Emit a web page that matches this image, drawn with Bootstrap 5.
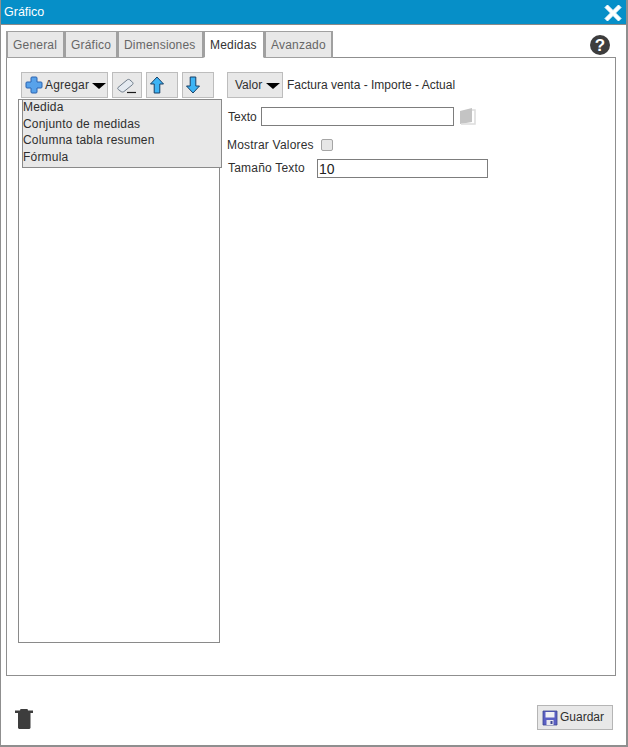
<!DOCTYPE html>
<html lang="es">
<head>
<meta charset="utf-8">
<title>Gráfico</title>
<link href="https://cdn.jsdelivr.net/npm/bootstrap@5.3.0/dist/css/bootstrap.min.css" rel="stylesheet">
<style>
html,body{height:747px;overflow:hidden;background:#fff}
body{font-family:"Liberation Sans",Arial,sans-serif;font-size:12px;line-height:14px;color:#2f2f2f}
.ventana{width:628px;height:747px;border:solid #8f8f8f;border-width:0 2px 2px 1px;display:flex;flex-direction:column}
.titulo{height:25px;background:#068fc8;border-bottom:1px solid #8a8a8a;color:#fff;font-size:12.5px;padding:0 4px 0 3px}
.cierre{display:block;margin-top:1px}
.cuerpo{position:relative;flex:1;padding:6px 10px 0 5px;display:flex;flex-direction:column}
.ayuda{position:absolute;left:589px;top:10px}
.pestanas{display:flex;height:27px;position:relative;z-index:1;margin-bottom:-1px;letter-spacing:.2px}
.pestana{height:27px;border:1px solid #a0a0a0;border-left-width:2px;background:#e8e8e8;color:#666;padding:6px 5px 0 5px;white-space:nowrap}
.pestana:first-child{width:58px}
.p2{width:53px}.p3{width:86px}.p4{width:61px}.p5{width:69px;border-right-width:2px}
.pestana.activa{background:#fff;border-bottom-color:#fff;color:#333}
.panel{height:619px;border:1px solid #8f8f8f;padding:14px 0 0 11px;display:flex;gap:5px;position:relative}
.izq{width:203px;margin-left:1px;flex:none;position:relative}
.barra{display:flex;gap:4px;padding-left:2px;height:26px}
.boton{height:26px;background:#e8e8e8;border:1px solid #bdbdbd;color:#2f2f2f;display:flex;align-items:center;white-space:nowrap}
.b-ag{width:87px;padding-left:3px;gap:2px;letter-spacing:.2px}
.b-ag .flecha{margin-left:1px}
.b-go{width:30px;padding-left:3px}
.b-su{width:32px;padding-left:2px}
.b-ba{width:32px;padding-left:2px}
.b-va{width:56px;padding-left:7px;gap:4px}
.flecha{width:0;height:0;border:solid transparent;border-width:6px 7px 0 7px;border-top-color:#000;display:block;margin-top:1px}
.caja{margin-left:-1px;margin-top:1px;width:202px;height:544px;border:1px solid #8a8a8a;background:#fff}
.menu-flota{position:absolute;left:3px;top:27px;width:200px;height:69px;background:#e8e8e8;border:1px solid #8a8a8a;letter-spacing:.2px}
.menu-flota div{height:16.67px;line-height:15px}
.der{flex:1;display:flex;flex-direction:column}
.fila{display:flex;align-items:center}
.f1{height:26px;gap:4px}
.f2{margin-top:8px;height:20px;gap:4px}
.f2 span,.f3 span{padding-top:2px}
.f2 span{margin-left:1px}
.f2 svg{margin-left:1px}
.f3{margin-top:8px;height:20px;gap:7px}
.f4{margin-top:4px;height:20px;padding-left:1px}
.rotulo{letter-spacing:.2px}
.campo{height:19px;border:1px solid #7d7d7d;background:#fff;padding:2px 1px 0;font-size:14px;line-height:15px;color:#222}
.c1{width:193px}.c2{width:171px;margin-left:12px}
.casilla{width:12px;height:12px;margin-top:2px;border:1px solid #a5a5a5;border-radius:2px;background:#e6e6e6;display:block}
.pie{flex:1;display:flex;justify-content:space-between;align-items:flex-start;padding:29px 3px 0 9px}
.papelera{margin-top:4px}
.b-gu{width:76px;height:25px;padding-left:4px;gap:2px;border-color:#b5b5b5}
.b-gu span{padding-bottom:2px}
</style>
</head>
<body>
<div class="ventana">
  <div class="titulo d-flex justify-content-between align-items-center">
    <span>Gráfico</span>
    <svg class="cierre" width="18" height="18" viewBox="0 0 18 18"><path d="M3.500 1 9 6.500 14.500 1 17 3.500 11.500 9 17 14.500 14.500 17 9 11.500 3.500 17 1 14.500 6.500 9 1 3.500Z" fill="#fff" stroke="#fff" stroke-linejoin="round"/></svg>
  </div>
  <div class="cuerpo">
    <svg class="ayuda" width="20" height="20" viewBox="0 0 20 20"><circle cx="10" cy="10" r="10" fill="#3d3d3d"/><text x="10" y="16" text-anchor="middle" font-family="Liberation Sans" font-weight="700" font-size="17" fill="#fff">?</text></svg>
    <div class="pestanas">
      <div class="pestana">General</div>
      <div class="pestana p2">Gráfico</div>
      <div class="pestana p3">Dimensiones</div>
      <div class="pestana p4 activa">Medidas</div>
      <div class="pestana p5">Avanzado</div>
    </div>
    <div class="panel">
      <div class="izq">
        <div class="barra">
          <div class="boton b-ag">
            <svg width="18" height="18" viewBox="0 0 18 18"><path d="M7 1h4a1 1 0 0 1 1 1v4h4a1 1 0 0 1 1 1v4a1 1 0 0 1-1 1h-4v4a1 1 0 0 1-1 1H7a1 1 0 0 1-1-1v-4H2a1 1 0 0 1-1-1V7a1 1 0 0 1 1-1h4V2a1 1 0 0 1 1-1Z" fill="#58a2ea" stroke="#2a62b0"/></svg>
            <span>Agregar</span><i class="flecha"></i>
          </div>
          <div class="boton b-go">
            <svg width="22" height="17" viewBox="0 0 22 17"><path d="M2 10.500 11 3c1-.8 2.200-.8 3 0l2.500 2.200c.8.8.7 1.800-.2 2.600L8 14.500c-1 .7-2 .7-3 0L2.300 12.500c-.7-.6-.9-1.400-.3-2Z" fill="#e4eaf0" stroke="#6f7c8a"/><path d="M11 15.500H20" stroke="#1a1a1a" stroke-width="1.200"/></svg>
          </div>
          <div class="boton b-su">
            <svg width="16" height="18" viewBox="0 0 16 18"><path d="M8 1 14.500 8H10.800V17H5.200V8H1.500Z" fill="#3db4f5" stroke="#173f66" stroke-linejoin="round"/></svg>
          </div>
          <div class="boton b-ba">
            <svg width="16" height="18" viewBox="0 0 16 18"><path d="M8 17 14.500 10H10.800V1H5.200V10H1.500Z" fill="#3db4f5" stroke="#173f66" stroke-linejoin="round"/></svg>
          </div>
        </div>
        <div class="caja"></div>
        <div class="menu-flota">
          <div>Medida</div>
          <div>Conjunto de medidas</div>
          <div>Columna tabla resumen</div>
          <div>Fórmula</div>
        </div>
      </div>
      <div class="der">
        <div class="fila f1"><div class="boton b-va"><span>Valor</span><i class="flecha"></i></div><span>Factura venta - Importe - Actual</span></div>
        <div class="fila f2"><span>Texto</span><div class="campo c1"></div>
          <svg width="18" height="18" viewBox="0 0 18 18"><path d="M1 4 13 1V15L1 17Z" fill="#c4c4c4"/><path d="M13 3h3v14H2" fill="none" stroke="#dcdcdc" stroke-width="1.500"/></svg>
        </div>
        <div class="fila f3"><span class="rotulo">Mostrar Valores</span><i class="casilla"></i></div>
        <div class="fila f4"><span class="rotulo">Tamaño Texto</span><div class="campo c2">10</div></div>
      </div>
    </div>
    <div class="pie">
      <svg class="papelera" width="18" height="20" viewBox="0 0 18 20"><path d="M5.500 0h7L13 1.500h5V4H15.500V19l-1 1H4l-1-1V4H0V1.500h5Z" fill="#3d3d3d"/></svg>
      <div class="boton b-gu">
        <svg width="16" height="16" viewBox="0 0 16 16"><path d="M1 1h14v14H1Z" fill="#5a5fc4" stroke="#3b4590" stroke-width=".8"/><path d="M3.500 2h9v5.500h-9Z" fill="#f0f0f4"/><path d="M4.500 10h7v5h-7Z" fill="#e8e8ee"/><path d="M8.500 11h2v3h-2Z" fill="#3b4590"/></svg>
        <span>Guardar</span>
      </div>
    </div>
  </div>
</div>
<script src="https://cdn.jsdelivr.net/npm/bootstrap@5.3.0/dist/js/bootstrap.bundle.min.js"></script>
</body>
</html>
